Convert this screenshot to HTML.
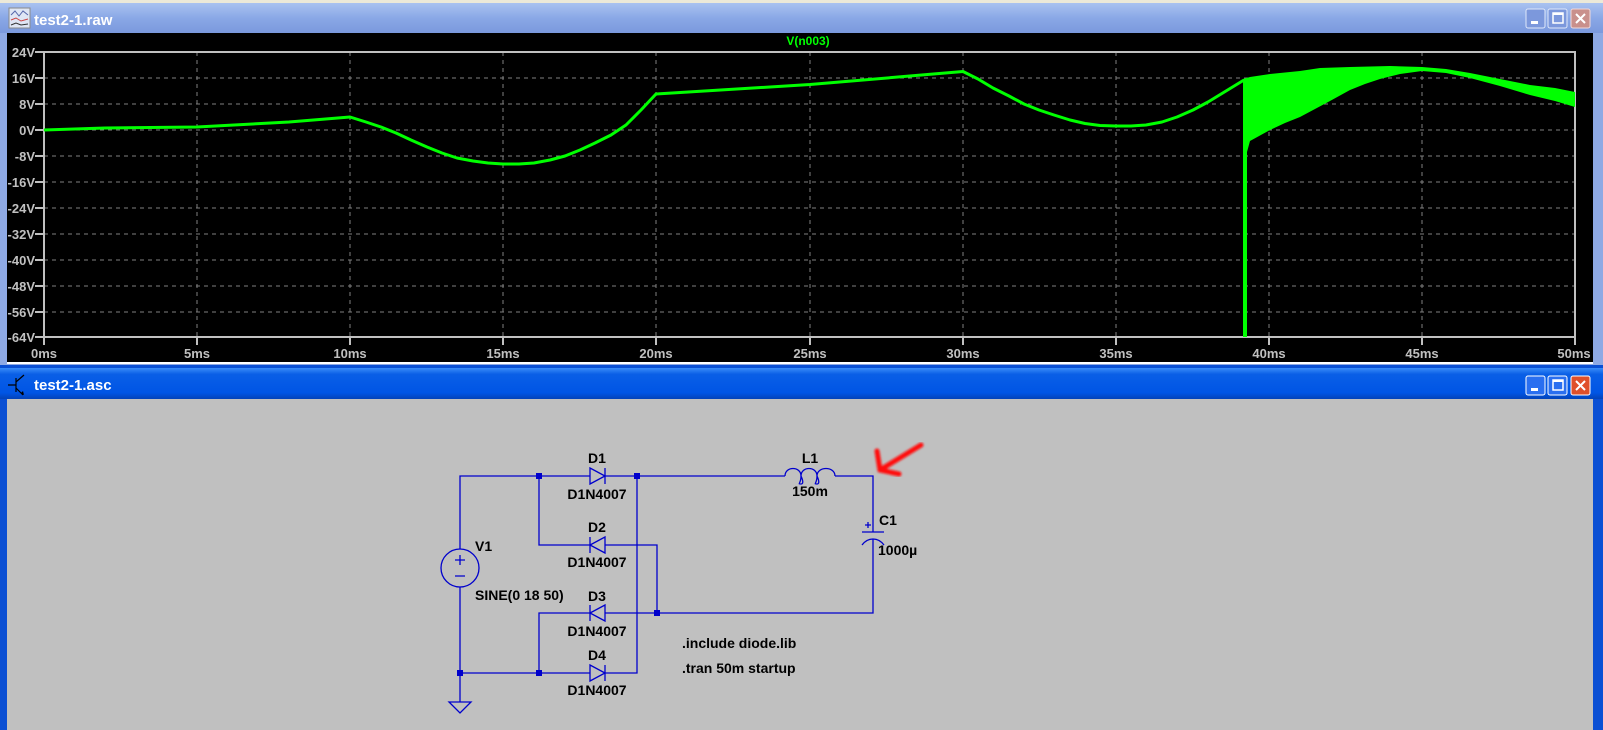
<!DOCTYPE html>
<html><head><meta charset="utf-8"><style>
html,body{margin:0;padding:0;background:#c0c0c0;width:1603px;height:730px;overflow:hidden}
svg{display:block}
text{font-family:"Liberation Sans",Arial,sans-serif;font-weight:bold}
</style></head><body>
<svg width="1603" height="730" viewBox="0 0 1603 730" xmlns="http://www.w3.org/2000/svg">
<defs>
<linearGradient id="tb1" x1="0" y1="0" x2="0" y2="1"><stop offset="0" stop-color="#a9c2f0"/><stop offset="0.5" stop-color="#8aa8e6"/><stop offset="1" stop-color="#7b99dd"/></linearGradient>
<linearGradient id="tb2" x1="0" y1="0" x2="0" y2="1"><stop offset="0" stop-color="#3a8cf8"/><stop offset="0.2" stop-color="#0a5fe6"/><stop offset="0.8" stop-color="#0055e5"/><stop offset="1" stop-color="#0342b8"/></linearGradient>
<filter id="bl"><feGaussianBlur stdDeviation="1"/></filter>
</defs>
<rect x="0" y="0" width="1603" height="3" fill="#ece9d8"/>
<rect x="0" y="3" width="1603" height="362" fill="#8ea9e4"/>
<rect x="0" y="3" width="1603" height="30" fill="url(#tb1)"/>
<g transform="translate(9,8)"><rect width="21" height="20" fill="#dfe6f4" stroke="#8a8a8a"/><path d="M2 7 L6 3 L10 8 L14 3 L19 7" stroke="#5566aa" fill="none"/><path d="M2 12 L7 10 L12 13 L19 11" stroke="#cc4444" fill="none"/><path d="M2 17 L7 15 L12 17 L19 16" stroke="#333" fill="none"/></g>
<text x="34" y="25" font-size="15" fill="#ffffff">test2-1.raw</text>
<g transform="translate(1526,9)">
<rect width="19" height="19" rx="2" fill="#7c98dc" stroke="#dfe8fa"/><rect x="5" y="12" width="7" height="3" fill="#fff"/>
<rect x="22" width="19" height="19" rx="2" fill="#7c98dc" stroke="#dfe8fa"/><rect x="27" y="4" width="10" height="10" fill="none" stroke="#fff" stroke-width="1.5"/><rect x="27" y="4" width="10" height="2" fill="#fff"/>
<rect x="45" width="19" height="19" rx="2" fill="#c9908c" stroke="#f0d8d8"/><path d="M50 5 L59 14 M59 5 L50 14" stroke="#fff" stroke-width="2"/>
</g>
<rect x="7" y="33" width="1586" height="329" fill="#000"/>
<rect x="7" y="362" width="1586" height="2" fill="#ffffff"/>
<g stroke="#808080" stroke-dasharray="4,4" stroke-width="1">
<line x1="44" y1="78" x2="1575" y2="78"/><line x1="44" y1="104" x2="1575" y2="104"/><line x1="44" y1="130" x2="1575" y2="130"/><line x1="44" y1="156" x2="1575" y2="156"/><line x1="44" y1="182" x2="1575" y2="182"/><line x1="44" y1="208" x2="1575" y2="208"/><line x1="44" y1="234" x2="1575" y2="234"/><line x1="44" y1="260" x2="1575" y2="260"/><line x1="44" y1="286" x2="1575" y2="286"/><line x1="44" y1="312" x2="1575" y2="312"/>
<line x1="197" y1="52" x2="197" y2="337"/><line x1="350" y1="52" x2="350" y2="337"/><line x1="503" y1="52" x2="503" y2="337"/><line x1="656" y1="52" x2="656" y2="337"/><line x1="810" y1="52" x2="810" y2="337"/><line x1="963" y1="52" x2="963" y2="337"/><line x1="1116" y1="52" x2="1116" y2="337"/><line x1="1269" y1="52" x2="1269" y2="337"/><line x1="1422" y1="52" x2="1422" y2="337"/>
</g>
<rect x="44" y="52" width="1531" height="285" fill="none" stroke="#c0c0c0" stroke-width="2"/>
<g stroke="#c0c0c0" stroke-width="2">
<path d="M35 52h9M35 78h9M35 104h9M35 130h9M35 156h9M35 182h9M35 208h9M35 234h9M35 260h9M35 286h9M35 312h9M35 337h9"/>
<path d="M44 337v8M197 337v8M350 337v8M503 337v8M656 337v8M810 337v8M963 337v8M1116 337v8M1269 337v8M1422 337v8M1575 337v8"/>
</g>
<g font-size="13" fill="#c0c0c0" text-anchor="end">
<text x="35" y="57">24V</text><text x="35" y="83">16V</text><text x="35" y="109">8V</text><text x="35" y="135">0V</text><text x="35" y="161">-8V</text><text x="35" y="187">-16V</text><text x="35" y="213">-24V</text><text x="35" y="239">-32V</text><text x="35" y="265">-40V</text><text x="35" y="291">-48V</text><text x="35" y="317">-56V</text><text x="35" y="342">-64V</text>
</g>
<g font-size="13" fill="#c0c0c0" text-anchor="middle">
<text x="44" y="358">0ms</text><text x="197" y="358">5ms</text><text x="350" y="358">10ms</text><text x="503" y="358">15ms</text><text x="656" y="358">20ms</text><text x="810" y="358">25ms</text><text x="963" y="358">30ms</text><text x="1116" y="358">35ms</text><text x="1269" y="358">40ms</text><text x="1422" y="358">45ms</text><text x="1574" y="358">50ms</text>
</g>
<text x="808" y="45" font-size="12" fill="#00ff00" text-anchor="middle">V(n003)</text>
<polyline fill="none" stroke="#00ff00" stroke-width="3" stroke-linejoin="round" points="44,130 105,128 197,127 289,122 350,117 366,122 381,127 396,133 411,140 427,147 442,153 457,158 473,161 488,163 503,164 519,164 534,163 550,160 565,156 580,150 595,143 611,135 626,125 641,110 656,94 810,84.5 963,71.5 978,79 993,88 1009,96 1024,104 1039,110 1054,115 1070,120 1085,123.5 1100,125.5 1116,126 1131,126 1146,125 1162,122 1177,117 1193,110 1208,102 1226,91 1244,80"/>
<polygon fill="#00ff00" points="1243,79 1243,337 1247,337 1247,152 1250,141 1270,130 1285,123 1300,117 1315,109 1330,101 1350,90 1365,84 1380,79 1400,74 1422,71 1446,73 1470,78 1500,86 1530,95 1555,101 1575,107 1575,92 1555,88 1530,85 1500,79 1470,73 1446,69 1422,67 1390,66 1350,67 1320,68 1300,71 1270,74 1250,77"/>
<rect x="0" y="365" width="1603" height="365" fill="#0a4fd4"/>
<rect x="0" y="368" width="1603" height="31" fill="url(#tb2)"/>
<g stroke="#000" stroke-width="1.2" fill="none"><path d="M8 385h8M16 378v14M16 382l8-7M16 388l7 7"/></g>
<path d="M21 393l3 2-1-4z" fill="#000"/>
<text x="34" y="390" font-size="15" fill="#ffffff">test2-1.asc</text>
<g transform="translate(1526,376)">
<rect width="19" height="19" rx="2" fill="#2a6ff0" stroke="#fff"/><rect x="5" y="12" width="7" height="3" fill="#fff"/>
<rect x="22" width="19" height="19" rx="2" fill="#2a6ff0" stroke="#fff"/><rect x="27" y="4" width="10" height="10" fill="none" stroke="#fff" stroke-width="1.5"/><rect x="27" y="4" width="10" height="2" fill="#fff"/>
<rect x="45" width="19" height="19" rx="2" fill="#e0502a" stroke="#fff"/><path d="M50 5 L59 14 M59 5 L50 14" stroke="#fff" stroke-width="2"/>
</g>
<rect x="7" y="399" width="1586" height="331" fill="#c0c0c0"/>
<g stroke="#0000cc" stroke-width="1.3" fill="none">
<path d="M460 549V476H590M605 476H785M835 476H873V532M873 539V613H657M460 587V673H590M605 673H637V476"/>
<path d="M539 476V545H590M605 545H657V613M590 613H539V673M605 613H657"/>
<path d="M460 673V702"/><path d="M449 702h22l-11 11z"/>
<circle cx="460" cy="568" r="19"/><path d="M460 555v10M455 560h10M455 576h10"/>
<path d="M590 468v16l15-8zM605 468v16"/><path d="M590 665v16l15-8zM605 665v16"/>
<path d="M605 537v16l-15-8zM590 537v16"/><path d="M605 605v16l-15-8zM590 605v16"/>
<path d="M785 476c0-10 16-10 16 0c0-10 16-10 16 0c0-10 18-10 18 0M801 476c0 8-4 8 0 8s0-8 0-8M817 476c0 8-4 8 0 8s0-8 0-8"/>
<path d="M862 532h22M862 545c6-8 16-8 22 0M868 522v6M865 525h6"/>
</g>
<g fill="#0000cc"><rect x="536" y="473" width="6" height="6"/><rect x="634" y="473" width="6" height="6"/><rect x="654" y="610" width="6" height="6"/><rect x="536" y="670" width="6" height="6"/><rect x="457" y="670" width="6" height="6"/></g>
<g font-size="14" fill="#000">
<text x="597" y="463" text-anchor="middle">D1</text><text x="597" y="499" text-anchor="middle">D1N4007</text>
<text x="597" y="532" text-anchor="middle">D2</text><text x="597" y="567" text-anchor="middle">D1N4007</text>
<text x="597" y="601" text-anchor="middle">D3</text><text x="597" y="636" text-anchor="middle">D1N4007</text>
<text x="597" y="660" text-anchor="middle">D4</text><text x="597" y="695" text-anchor="middle">D1N4007</text>
<text x="475" y="551">V1</text><text x="475" y="600">SINE(0 18 50)</text>
<text x="810" y="463" text-anchor="middle">L1</text><text x="810" y="496" text-anchor="middle">150m</text>
<text x="879" y="525">C1</text><text x="878" y="555">1000µ</text>
<text x="682" y="648">.include diode.lib</text><text x="682" y="673">.tran 50m startup</text>
</g>
<g stroke="#ff1010" stroke-width="5" stroke-linecap="round" fill="none" filter="url(#bl)"><path d="M921 445L880 470M877 451L880 470 899 474"/></g>
</svg>
</body></html>
